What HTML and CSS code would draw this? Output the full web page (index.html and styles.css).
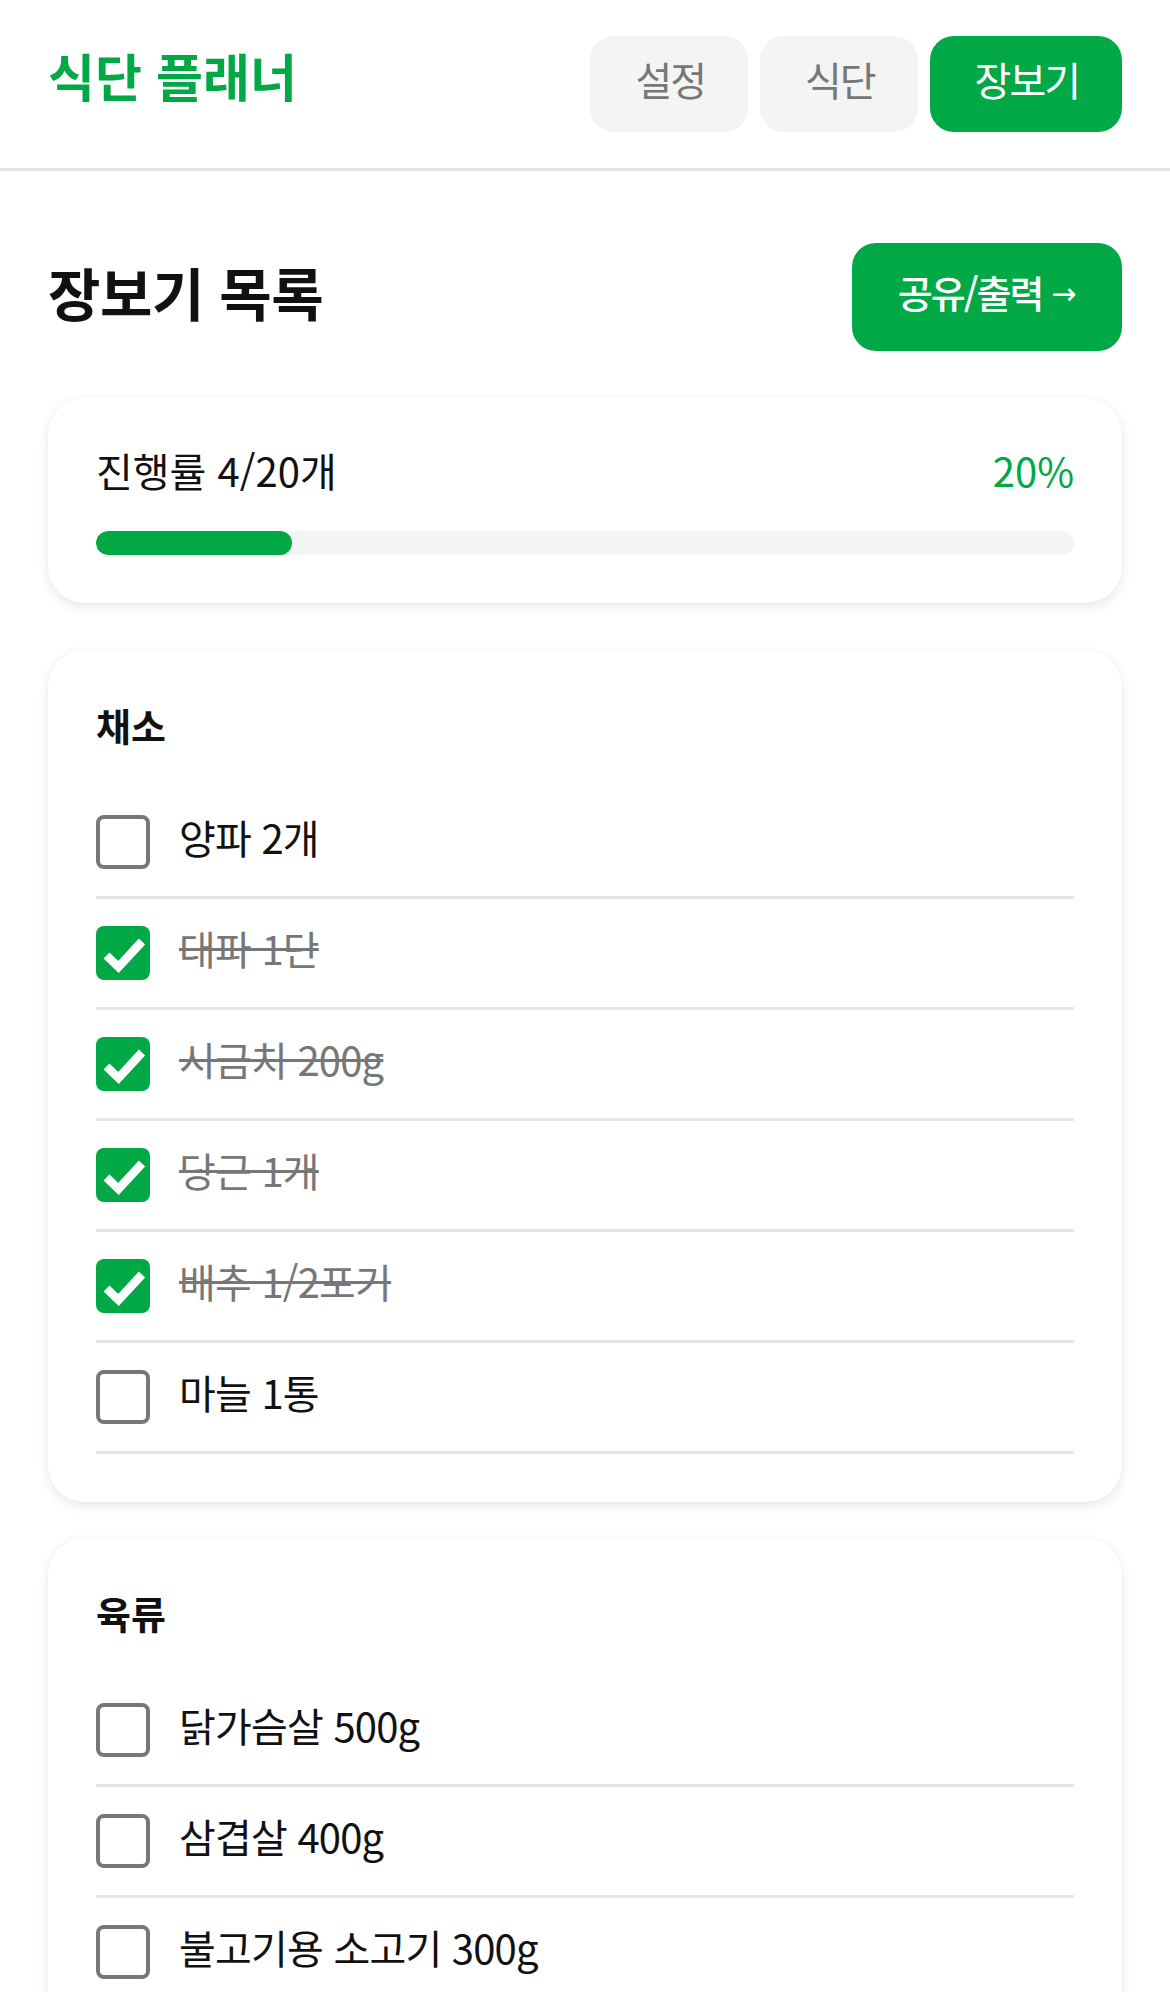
FILE: index.html
```html
<!DOCTYPE html>
<html lang="ko">
<head>
<meta charset="utf-8">
<title>식단 플래너 - 장보기</title>
<link rel="stylesheet" href="styles.css">
</head>
<body>
<header class="topbar">
  <div class="brand">식단 플래너</div>
  <nav class="tabs">
    <button class="tab">설정</button>
    <button class="tab">식단</button>
    <button class="tab tab-active">장보기</button>
  </nav>
</header>
<main class="page">
  <div class="section-head">
    <h1 class="section-title">장보기 목록</h1>
    <button class="share-btn">공유/출력 <span class="arrow">→</span></button>
  </div>

  <section class="card progress-card">
    <div class="progress-row">
      <span class="progress-label">진행률 4/20개</span>
      <span class="progress-pct">20%</span>
    </div>
    <div class="bar"><div class="bar-fill" style="width:20%"></div></div>
  </section>

  <div class="cards">
    <section class="card category">
      <h2 class="cat-title">채소</h2>
      <ul class="items">
        <li class="item"><span class="box"></span><span class="item-text">양파 2개</span></li>
        <li class="item done"><span class="box box-checked"><svg viewBox="0 0 54 54" class="check"><polyline points="10.5,29.5 22.5,41 46,15.5"/></svg></span><span class="item-text">대파 1단</span></li>
        <li class="item done"><span class="box box-checked"><svg viewBox="0 0 54 54" class="check"><polyline points="10.5,29.5 22.5,41 46,15.5"/></svg></span><span class="item-text">시금치 200g</span></li>
        <li class="item done"><span class="box box-checked"><svg viewBox="0 0 54 54" class="check"><polyline points="10.5,29.5 22.5,41 46,15.5"/></svg></span><span class="item-text">당근 1개</span></li>
        <li class="item done"><span class="box box-checked"><svg viewBox="0 0 54 54" class="check"><polyline points="10.5,29.5 22.5,41 46,15.5"/></svg></span><span class="item-text">배추 1/2포기</span></li>
        <li class="item"><span class="box"></span><span class="item-text">마늘 1통</span></li>
      </ul>
    </section>

    <section class="card category">
      <h2 class="cat-title">육류</h2>
      <ul class="items">
        <li class="item"><span class="box"></span><span class="item-text">닭가슴살 500g</span></li>
        <li class="item"><span class="box"></span><span class="item-text">삼겹살 400g</span></li>
        <li class="item"><span class="box"></span><span class="item-text">불고기용 소고기 300g</span></li>
      </ul>
    </section>
  </div>
</main>
</body>
</html>
```
FILE: styles.css
```css
* { box-sizing: border-box; }

html, body {
  margin: 0;
  padding: 0;
  background: #ffffff;
}

body {
  font-family: "Noto Sans CJK KR", "Noto Sans", sans-serif;
  color: #111111;
}

.topbar {
  display: flex;
  align-items: center;
  justify-content: space-between;
  height: 171px;
  padding: 0 48px;
  border-bottom: 3px solid #e6e6e6;
}

.brand {
  font-size: 51px;
  font-weight: 700;
  color: #00a846;
  letter-spacing: 0;
  line-height: 1;
  margin-top: -18px;
}

.tabs {
  display: flex;
  gap: 12px;
}

.tab {
  height: 96px;
  padding: 0 43px 10px 45px;
  border: none;
  border-radius: 24px;
  background: #f4f4f4;
  color: #777777;
  font-family: inherit;
  font-size: 40px;
  letter-spacing: -2px;
  line-height: 1;
}

.tab-active {
  background: #00a846;
  color: #ffffff;
}

.page {
  padding: 0 48px;
}

.section-head {
  display: flex;
  align-items: center;
  justify-content: space-between;
  margin-top: 72px;
  margin-bottom: 47px;
}

.section-title {
  margin: 0 0 12px;
  font-size: 57px;
  font-weight: 700;
  letter-spacing: -0.5px;
  line-height: 1;
  color: #111111;
}

.share-btn {
  width: 270px;
  height: 108px;
  border: none;
  border-radius: 24px;
  background: #00a846;
  color: #ffffff;
  font-family: inherit;
  font-size: 38px;
  font-weight: 500;
  letter-spacing: -2px;
  line-height: 1;
  padding: 0 0 10px;
}

.arrow {
  font-family: "DejaVu Sans", sans-serif;
  font-size: 30px;
  letter-spacing: 0;
  vertical-align: 4px;
}

.card {
  background: #ffffff;
  border-radius: 36px;
  box-shadow: 0 4px 12px rgba(0, 0, 0, 0.09), 0 0 2px rgba(0, 0, 0, 0.05);
  padding: 48px;
}

.progress-card {
  margin-bottom: 47px;
}

.progress-row {
  display: flex;
  justify-content: space-between;
  align-items: center;
  height: 57px;
  margin-bottom: 28px;
  padding-bottom: 10px;
  font-size: 40px;
  letter-spacing: 0;
}

.progress-pct {
  color: #00a846;
}

.bar {
  height: 24px;
  border-radius: 12px;
  background: #f4f4f4;
  overflow: hidden;
}

.bar-fill {
  height: 100%;
  border-radius: 12px;
  background: #00a846;
}

.cards {
  display: flex;
  flex-direction: column;
  gap: 36px;
  padding-bottom: 48px;
}

.cat-title {
  margin: 0 0 36px;
  height: 54px;
  line-height: 54px;
  font-size: 38px;
  font-weight: 700;
  letter-spacing: 0;
}

.items {
  list-style: none;
  margin: 0;
  padding: 0;
}

.item {
  display: flex;
  align-items: center;
  gap: 29px;
  padding: 27px 0;
  border-bottom: 3px solid #e6e6e6;
}

.box {
  flex: none;
  width: 54px;
  height: 54px;
  border: 4px solid #777777;
  border-radius: 8px;
  background: #ffffff;
}

.box-checked {
  border: none;
  background: #00a846;
}

.check {
  display: block;
  width: 54px;
  height: 54px;
  fill: none;
  stroke: #ffffff;
  stroke-width: 8.5;
  stroke-linejoin: miter;
}

.item-text {
  font-size: 40px;
  line-height: 54px;
  margin-top: -10px;
  letter-spacing: -0.8px;
  color: #111111;
}

.done .item-text {
  color: #777777;
  text-decoration: line-through;
  text-decoration-thickness: 3px;
}
```
